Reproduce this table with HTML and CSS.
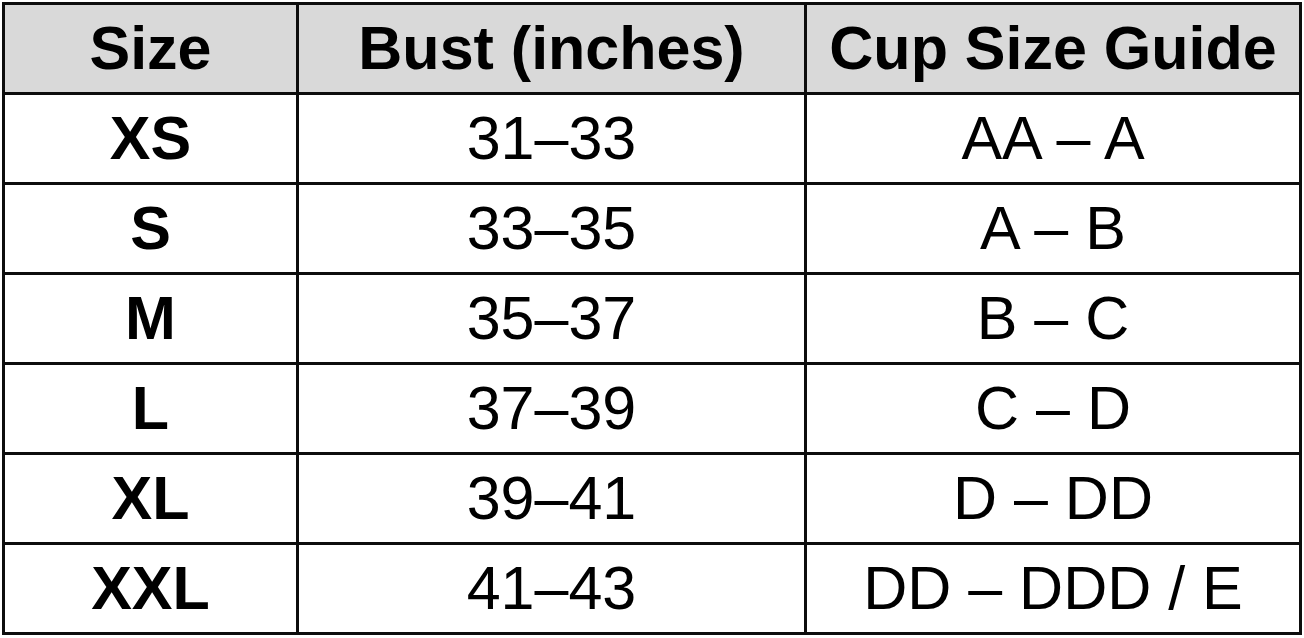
FILE: index.html
```html
<!DOCTYPE html>
<html>
<head>
<meta charset="utf-8">
<link rel="stylesheet" href="styles.css">
</head>
<body>
<table class="chart">
  <colgroup>
    <col class="c-size">
    <col class="c-bust">
    <col class="c-cup">
  </colgroup>
  <thead>
    <tr><th>Size</th><th>Bust (inches)</th><th>Cup Size Guide</th></tr>
  </thead>
  <tbody>
    <tr><td class="sz">XS</td><td>31–33</td><td>AA – A</td></tr>
    <tr><td class="sz">S</td><td>33–35</td><td>A – B</td></tr>
    <tr><td class="sz">M</td><td>35–37</td><td>B – C</td></tr>
    <tr><td class="sz">L</td><td>37–39</td><td>C – D</td></tr>
    <tr><td class="sz">XL</td><td>39–41</td><td>D – DD</td></tr>
    <tr><td class="sz">XXL</td><td>41–43</td><td>DD – DDD / E</td></tr>
  </tbody>
</table>
</body>
</html>
```
FILE: styles.css
```css
html, body {
  margin: 0;
  padding: 0;
  background: #ffffff;
}
body {
  padding: 2px 0 0 2px;
  font-family: "Liberation Sans", Arial, sans-serif;
  color: #000;
}
.chart {
  border-collapse: collapse;
  width: 1297px;
  table-layout: fixed;
}
.c-size { width: 294px; }
.c-bust { width: 508px; }
.c-cup { width: 495px; }
.chart th,
.chart td {
  border: 3px solid #0d0d0d;
  height: 87px;
  padding: 0;
  text-align: center;
  vertical-align: middle;
  font-size: 61px;
  line-height: 1;
  font-weight: 400;
}
.chart th {
  background: #d9d9d9;
  font-weight: 700;
}
.chart td.sz {
  font-weight: 700;
}
```
